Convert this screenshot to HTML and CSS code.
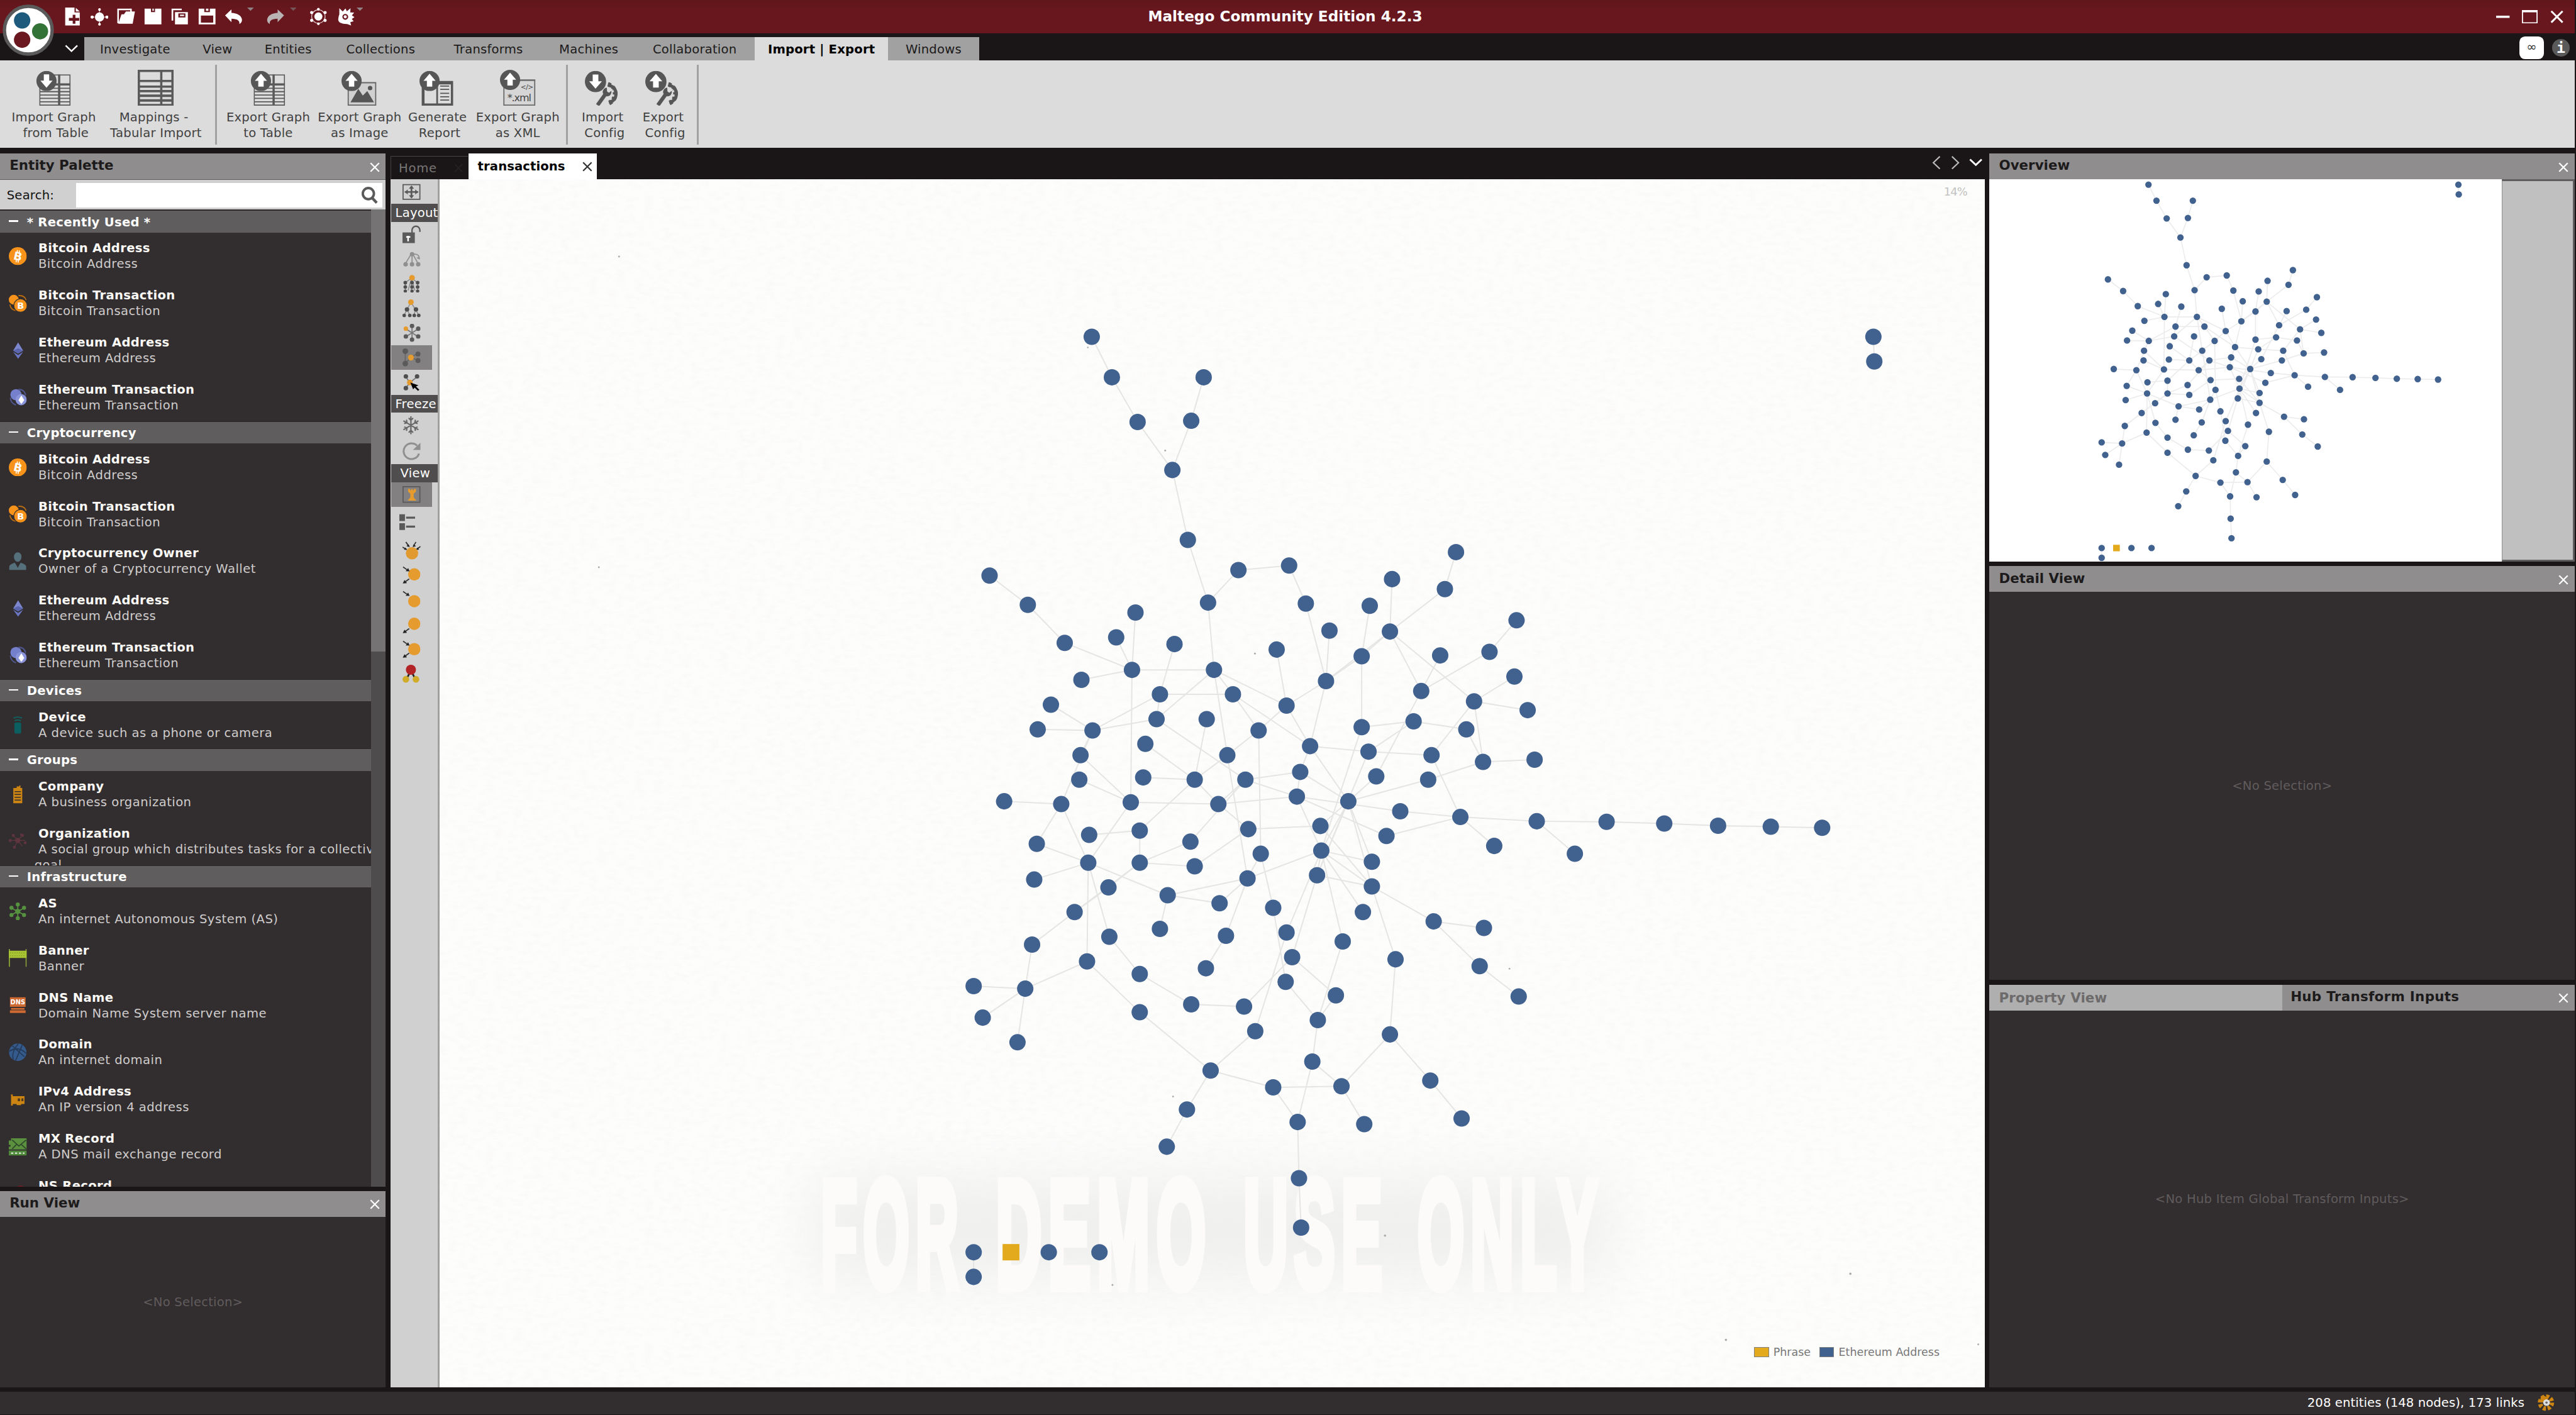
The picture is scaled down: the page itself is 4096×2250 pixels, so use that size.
FILE: index.html
```html
<!DOCTYPE html>
<html lang="en">
<head>
<meta charset="utf-8">
<title>Maltego Community Edition 4.2.3</title>
<link rel="stylesheet" href="styles.css">
</head>
<body>
<svg class="defs" width="0" height="0" aria-hidden="true">
  <symbol id="x" viewBox="0 0 10 10"><path d="M.8 .8 9.2 9.2M9.2 .8 .8 9.2" fill="none" stroke="currentColor" stroke-width="1.4"/></symbol>
  <symbol id="tri" viewBox="0 0 6 3"><path d="M0 0h6L3 3z" fill="currentColor"/></symbol>
  <symbol id="btc" viewBox="0 0 16 16"><circle cx="8" cy="8" r="8" fill="#f7931a"/><text x="8.2" y="11.7" class="glyph" transform="rotate(12 8 8)">B</text><path d="M7.6 2.6v2M9.4 3v2M6.6 11.4v2M8.4 11.8v2" stroke="#fff" stroke-width=".9"/></symbol>
  <symbol id="btx" viewBox="0 0 16 16"><circle cx="4.4" cy="4.8" r="4.4" fill="#f7931a"/><path d="M8.5 1.2q5.500-.6 7 4M1 9q.5 4.500 5 5.500" fill="none" stroke="#b86d13" stroke-width="1"/><circle cx="10.400" cy="10" r="5.900" fill="#f7931a" stroke="#322d2e" stroke-width=".6"/><text x="10.500" y="13" class="glyph small">B</text></symbol>
  <symbol id="eth" viewBox="0 0 16 16"><path d="M8.300 .8 12.800 8.200 8.300 10.800 3.900 8.200z" fill="#7b86cf"/><path d="M3.900 9.300 8.300 12 12.800 9.300 8.300 15.400z" fill="#6a76c4"/><path d="M8.300 6.200 12.800 8.200 8.300 10.800 3.900 8.200z" fill="#5a64ad"/></symbol>
  <symbol id="etx" viewBox="0 0 16 16"><circle cx="6.400" cy="5.400" r="5" fill="#7480cc"/><path d="M8.500 .8q5.500-.4 6.500 5M1.400 8q.3 5 5 6.600" fill="none" stroke="#4c548a" stroke-width="1.200"/><circle cx="11" cy="9.800" r="5" fill="#8a94da"/><path d="m11.200 6 2.600 4.200-2.600 3.600-2.600-3.600z" fill="#fff"/></symbol>
  <symbol id="person" viewBox="0 0 16 16"><path d="M8 .2a3.400 3.600 0 0 1 3.300 4c0 2-1.200 4.400-3.300 4.400S4.600 6.200 4.600 4.200A3.400 3.600 0 0 1 8 .2zM.4 16v-3.400q.4-1.800 5-3.200L7 12l1 2 1-2 1.500-2.600q4.600 1.400 5 3.200V16z" fill="#56707b"/></symbol>
  <symbol id="device" viewBox="0 0 16 16"><path d="M4.200 1.600q3.800-2 7.600 0M5.200 4q2.800-1.400 5.600 0" fill="none" stroke="#0f6563" stroke-width="1"/><rect x="5" y="5.500" width="6" height="10" rx="1.400" fill="#0b5f60"/></symbol>
  <symbol id="company" viewBox="0 0 16 16"><path d="M4 2.200h3V.8h2.400V0h1v2.200H12V16H4z" fill="#cc8413"/><path d="M5.200 5.500h5.600M5.200 8h5.600M5.200 10.500h5.600M5.200 13h5.600" stroke="#322d2e" stroke-width=".8"/></symbol>
  <symbol id="org" viewBox="0 0 16 16"><g fill="#5f3540" stroke="#5f3540" stroke-width=".7"><path d="M8 7 4 2.500M8 7l4-4.500M8 7 1.500 7M8 7h6.500M8 7l-3 6M8 7l4 5"/><circle cx="8" cy="7" r="2"/><circle cx="4" cy="2.500" r="1"/><circle cx="12.200" cy="2.500" r="1"/><circle cx="1.300" cy="7" r="1"/><circle cx="14.700" cy="9" r="1"/><circle cx="5" cy="13" r="1"/><circle cx="11" cy="1.800" r=".7"/></g></symbol>
  <symbol id="as" viewBox="0 0 16 16"><g fill="#55913f" stroke="#55913f" stroke-width="1"><path d="M8 2v12M2.500 5l11 6M13.500 5l-11 6"/><circle cx="8" cy="8" r="1.800"/><circle cx="8" cy="1.800" r="1.300"/><circle cx="8" cy="14.200" r="1.300"/><circle cx="2.400" cy="4.800" r="1.300"/><circle cx="13.600" cy="4.800" r="1.300"/><circle cx="2.400" cy="11.200" r="1.300"/><circle cx="13.600" cy="11.200" r="1.300"/></g></symbol>
  <symbol id="banner" viewBox="0 0 16 16"><path d="M.5 0v16M15.500 0v16" stroke="#8da536" stroke-width="1"/><path d="M0 1.500h16v6.500H0z" fill="#a9c433"/><path d="M1 3.500h14M1 6h14" stroke="#86a02a" stroke-width=".8" stroke-dasharray="1 1"/></symbol>
  <symbol id="dns" viewBox="0 0 16 16"><path d="M1 1h14v8.500H1zM2 10.500h12v1.600H2zM1 12.600h14V15H1z" fill="#cf6a33"/><text x="8" y="7.200" class="glyph dns">DNS</text></symbol>
  <symbol id="domain" viewBox="0 0 16 16"><circle cx="8" cy="8" r="7.800" fill="#355a8c"/><path d="M3 2.200 14 12M6 15.500 12 1.500M.5 7q8-5 15 2M4 14.500Q2 8 8.500.3" fill="none" stroke="#263b5a" stroke-width="1"/></symbol>
  <symbol id="ipv4" viewBox="0 0 16 16"><path d="M2 3.500h1.500V5H14v7h-3v1H7v-1H3.500v1.500H2z" fill="#cc8413"/><path d="M8 7h2v2.500H8zM11.300 7H13v2.500h-1.700z" fill="#4c3b20"/></symbol>
  <symbol id="mx" viewBox="0 0 16 16"><path d="M2 .5h14v10H0V8h1.500V6.500H0v-4h2z" fill="#5b903f"/><path d="m3 2 6 5.500L15.500 2M3 10l4-4M15.500 10l-4.500-4" fill="none" stroke="#2f4a2a" stroke-width="1"/><path d="M0 11.500h16V16H0z" fill="#4f8a3a"/><path d="M2 13.800h12" stroke="#fff" stroke-width="1" stroke-dasharray="2 1.500"/></symbol>
  <symbol id="ns" viewBox="0 0 16 16"><circle cx="10.500" cy="5" r="4.500" fill="#6b2026"/></symbol>
  <symbol id="up" viewBox="0 0 18 18"><circle cx="9" cy="9" r="9" fill="#565656"/><path d="m9 2.500 5.400 6.300h-3V14H6.600V8.800h-3z" fill="#fff"/></symbol>
  <symbol id="down" viewBox="0 0 18 18"><circle cx="9" cy="9" r="9" fill="#565656"/><path d="m9 15 5.400-6.300h-3V3H6.600v5.700h-3z" fill="#fff"/></symbol>
  <symbol id="sheet" viewBox="0 0 28 28"><path d="M.5.500h27v27H.5zM0 9.300h28M0 12.500h28M0 15.500h28M0 18.500h28M0 21.500h28M0 24.500h28" fill="none" stroke="#5a5a5a"/><path d="M0 9h28" stroke="#5a5a5a" stroke-width="2"/><path d="M17.800 0v28" stroke="#5a5a5a" stroke-width="2"/></symbol>
  <symbol id="wrench" viewBox="0 0 21 21"><g fill="none" stroke="#565656"><path d="M11.500 2.800a7.800 7.800 0 0 1 0 15.300" stroke-width="2.800"/><path d="M10.500 2a8.800 8.800 0 0 1 0 17" stroke-width="4.200" stroke-dasharray="2.500 2.300"/><path d="M1.300 20.500 8.500 10.500" stroke-width="3.400"/></g><circle cx="9.800" cy="8.800" r="3.900" fill="#565656"/><path d="M9.800 8.300 9.500 3.500 15 6.500 11.500 9.500z" fill="#dcdcdc"/></symbol>
  <symbol id="io" viewBox="0 0 16 16"><circle cx="10.500" cy="8" r="5.500" fill="#e59b2d"/></symbol>
  <symbol id="ain" viewBox="0 0 16 16"><path d="M.5.800 4 3.300" stroke="#333" fill="none"/><path d="M6.400 4.800 2.800 4.600 5 1.800z" fill="#222"/></symbol>
  <symbol id="aout" viewBox="0 0 16 16"><path d="M6 11.500 2.500 14" stroke="#333" fill="none"/><path d="M.2 15.600 4 15.300 1.800 12.500z" fill="#222"/></symbol>
</svg>

<div class="window">
  <header class="titlebar">
    <div class="quick">
      <svg viewBox="0 0 16 16"><path fill-rule="evenodd" d="M1.500 0h8.300v4.300h4.700V16h-13zM11 .3l3.500 3.200H11zM8.200 6.500v2.700H4.800v2.600h3.400v2.700h2.400v-2.700h3.400V9.200h-3.400V6.500z" fill="#fff"/></svg>
      <svg viewBox="0 0 16 16"><g fill="#fff" stroke="#fff" stroke-width=".8"><path d="M8 1v14M1 8.500h14" stroke-dasharray="1 .5"/><circle cx="8" cy="8.500" r="3.700"/><circle cx="8" cy="1.800" r=".8"/><circle cx="8" cy="15" r=".8"/><circle cx="1.400" cy="8.500" r="1"/><circle cx="14.600" cy="8.500" r="1"/></g></svg>
      <svg viewBox="0 0 16 16"><path d="M1 14V1.700h11.500" fill="none" stroke="#fff" stroke-width="1.400"/><path d="M12.500 1v3" stroke="#fff" stroke-width="1.400"/><path d="M4 6h2.200L8 3.500h8L14 14.500H1.200z" fill="#fff"/></svg>
      <svg viewBox="0 0 16 16"><path d="M.5 1h5.700v3h3.600V1h5.700v14H.5zM7.500 1h1.200v2H7.500z" fill="#fff"/></svg>
      <svg viewBox="0 0 16 16"><path d="M9.500 1.700H1.200v10" fill="none" stroke="#fff" stroke-width="1.500"/><path fill-rule="evenodd" d="M3.500 4H15v11H3.500zM6.500 5.200v3.600h6.300V5.200zM8 6.300h3.600v1.300H8z" fill="#fff"/></svg>
      <svg viewBox="0 0 16 16"><path fill-rule="evenodd" d="M.5 1h5v3h5V1h5v14H.5zM2.500 7.200v6.300h11V7.200zM7 1h2.200v2H7z" fill="#fff"/></svg>
      <svg viewBox="0 0 16 16"><path d="m.5 7 5.700-5.300v3q8 .5 9.300 5.500.5 3-2.300 4.500.8-4.500-7-4.700v3z" fill="#fff"/></svg>
      <svg class="tri dim" viewBox="0 0 6 3"><use href="#tri"/></svg>
      <svg class="redo" viewBox="0 0 16 16"><path d="M15.500 7 9.800 1.700v3Q1.800 5.200.5 10.200q-.5 3 2.300 4.500Q2 10.200 9.800 10v3z" fill="#b9b3b4"/></svg>
      <svg class="tri dimmer" viewBox="0 0 6 3"><use href="#tri"/></svg>
      <svg class="net" viewBox="0 0 16 16"><circle cx="8" cy="8" r="3.600" fill="#fff"/><circle cx="8" cy="8" r="6" fill="none" stroke="#e2c9cb" stroke-width=".7"/><g fill="#fff"><circle cx="8" cy="1.500" r="1.200"/><circle cx="8" cy="14.500" r="1.200"/><circle cx="2" cy="4.500" r="1.400"/><circle cx="14" cy="4.500" r="1.400"/><circle cx="2" cy="11.500" r="1.400"/><circle cx="14" cy="11.500" r="1.400"/></g></svg>
      <svg viewBox="0 0 16 16"><path d="m2 .5 3 3L7.500.8l1.200 2.500L12 .5l-.3 3.800 3.500.2-2 2.500 2.300 1.500-2.400 1.700 1.700 2-3 .8.700 3-3.500-1.300Q1 14.500 1 10.500q.3-3 1-4.500z" fill="#fff"/><circle cx="7.300" cy="8.300" r="2" fill="#fff" stroke="#69171f" stroke-width="1.200"/></svg>
      <svg class="tri dim last" viewBox="0 0 6 3"><use href="#tri"/></svg>
    </div>
    <h1>Maltego Community Edition 4.2.3</h1>
    <div class="winbtns">
      <svg viewBox="0 0 12 12"><path d="M0 6h12" stroke="#fff" stroke-width="2"/></svg>
      <svg class="max" viewBox="0 0 14 12"><path d="M.5.500h13v11H.5z" fill="none" stroke="#fff"/><path d="M0 1h14" stroke="#fff" stroke-width="2"/></svg>
      <svg viewBox="0 0 10 10"><use href="#x"/></svg>
    </div>
  </header>

  <nav class="tabs">
    <svg class="chev" viewBox="0 0 12 7"><path d="m.8.800 5.200 5 5.200-5" fill="none" stroke="#fff" stroke-width="1.400"/></svg>
    <div class="strip">
      <span>Investigate</span><span>View</span><span>Entities</span><span>Collections</span><span>Transforms</span><span>Machines</span><span>Collaboration</span><span class="on">Import | Export</span><span>Windows</span>
    </div>
    <div class="help"><span class="pill">∞</span><span class="info">i</span></div>
  </nav>
  <svg class="logo" viewBox="0 0 46 46"><circle cx="23" cy="23" r="21.300" fill="#fff" stroke="#5a5a5a" stroke-width="3"/><circle cx="17.500" cy="14.300" r="7.300" fill="#1d5a7c"/><circle cx="33.500" cy="24" r="7.200" fill="#337337"/><circle cx="17.500" cy="31.500" r="7.300" fill="#6a171f"/></svg>

  <section class="ribbon">
    <div class="group">
      <button style="width:8.4rem"><svg viewBox="0 0 32 32"><use href="#sheet" x="3" y="4" width="28" height="28"/><use href="#down" x="0" y="1" width="19" height="18"/></svg>Import Graph<br>&nbsp;from Table</button>
      <button style="width:9.8rem"><svg viewBox="0 0 32 32"><path fill-rule="evenodd" d="M0 0h32v32H0zM2 2v7h18V2zM22 2v7h8V2zM2 11v3h18v-3zM22 11v3h8v-3zM2 16v2h18v-2zM22 16v2h8v-2zM2 20v2h18v-2zM22 20v2h8v-2zM2 24.200v2h18v-2zM22 24.200v2h8v-2zM2 28.500v2h18v-2zM22 28.500v2h8v-2z" fill="#5a5a5a"/></svg>Mappings -&nbsp;<br>Tabular Import</button>
    </div>
    <div class="group">
      <button style="width:8.1rem"><svg viewBox="0 0 32 32"><use href="#sheet" x="3" y="4" width="28" height="28"/><use href="#up" x="0" y="1" width="19" height="18"/></svg>Export Graph<br>to Table</button>
      <button style="width:8.2rem"><svg viewBox="0 0 32 32"><path d="M6 11.500h24.500v20H6z" fill="#d0d0d0" stroke="#666"/><path d="m8 29 7-12 4 6 4-4 6 10z" fill="#565656"/><circle cx="25.500" cy="16.300" r="2" fill="#565656"/><use href="#up" x="0" y="1" width="18" height="18"/></svg>Export Graph<br>as Image</button>
      <button style="width:5.7rem"><svg viewBox="0 0 32 32"><path fill-rule="evenodd" d="M2 10h28v22H2zM4.500 13v17h10.500V13zM16.500 13v17h11.500V13z" fill="#565656"/><path d="M18.500 14.500h8M18.500 17.500h8M18.500 21h8M18.500 24h8M18.500 27h8" stroke="#565656"/><use href="#up" x="0" y="1" width="18" height="18"/></svg>Generate<br>&nbsp;Report</button>
      <button style="width:8.6rem"><svg viewBox="0 0 32 32"><path d="M3.500 9.500H31v22H3.500z" fill="#d6d6d6" stroke="#6a6a6a"/><path d="M3 9h28.500" stroke="#6a6a6a"/><text x="24" y="17.500" class="tag">&lt;/&gt;</text><text x="17" y="28" class="xml">*.xml</text><use href="#up" x="0" y="0" width="18" height="18"/></svg>Export Graph<br>as XML</button>
    </div>
    <div class="group">
      <button style="width:5.2rem"><svg viewBox="0 0 32 32"><use href="#wrench" x="10" y="11" width="21" height="21"/><use href="#down" x="0" y="1" width="19" height="19"/></svg>Import<br>&nbsp;Config</button>
      <button style="width:5.6rem"><svg viewBox="0 0 32 32"><use href="#wrench" x="10" y="11" width="21" height="21"/><use href="#up" x="0" y="1" width="19" height="19"/></svg>Export<br>&nbsp;Config</button>
    </div>
  </section>

  <main class="work">
    <aside class="left">
      <section class="palette">
        <div class="phead"><b>Entity Palette</b><svg viewBox="0 0 10 10"><use href="#x"/></svg></div>
        <div class="search"><label>Search:</label><div class="field"><svg viewBox="0 0 16 16"><circle cx="7" cy="6.500" r="5.300" fill="none" stroke="#5a5a5a" stroke-width="2.300"/><path d="m10.500 10.500 4.500 4.700" stroke="#5a5a5a" stroke-width="2.600"/></svg></div></div>
        <div class="listwrap">
          <div class="list">
            <h3>* Recently Used *</h3>
            <div class="item"><svg><use href="#btc"/></svg><p><b>Bitcoin Address</b>Bitcoin Address</p></div>
            <div class="item"><svg><use href="#btx"/></svg><p><b>Bitcoin Transaction</b>Bitcoin Transaction</p></div>
            <div class="item"><svg><use href="#eth"/></svg><p><b>Ethereum Address</b>Ethereum Address</p></div>
            <div class="item"><svg><use href="#etx"/></svg><p><b>Ethereum Transaction</b>Ethereum Transaction</p></div>
            <h3>Cryptocurrency</h3>
            <div class="item"><svg><use href="#btc"/></svg><p><b>Bitcoin Address</b>Bitcoin Address</p></div>
            <div class="item"><svg><use href="#btx"/></svg><p><b>Bitcoin Transaction</b>Bitcoin Transaction</p></div>
            <div class="item"><svg><use href="#person"/></svg><p><b>Cryptocurrency Owner</b>Owner of a Cryptocurrency Wallet</p></div>
            <div class="item"><svg><use href="#eth"/></svg><p><b>Ethereum Address</b>Ethereum Address</p></div>
            <div class="item"><svg><use href="#etx"/></svg><p><b>Ethereum Transaction</b>Ethereum Transaction</p></div>
            <h3>Devices</h3>
            <div class="item"><svg><use href="#device"/></svg><p><b>Device</b>A device such as a phone or camera</p></div>
            <h3>Groups</h3>
            <div class="item"><svg><use href="#company"/></svg><p><b>Company</b>A business organization</p></div>
            <div class="item"><svg><use href="#org"/></svg><p><b>Organization</b>A social group which distributes tasks for a collective<br><span class="hang">goal</span></p></div>
            <h3>Infrastructure</h3>
            <div class="item"><svg><use href="#as"/></svg><p><b>AS</b>An internet Autonomous System (AS)</p></div>
            <div class="item"><svg><use href="#banner"/></svg><p><b>Banner</b>Banner</p></div>
            <div class="item"><svg><use href="#dns"/></svg><p><b>DNS Name</b>Domain Name System server name</p></div>
            <div class="item"><svg><use href="#domain"/></svg><p><b>Domain</b>An internet domain</p></div>
            <div class="item"><svg><use href="#ipv4"/></svg><p><b>IPv4 Address</b>An IP version 4 address</p></div>
            <div class="item"><svg><use href="#mx"/></svg><p><b>MX Record</b>A DNS mail exchange record</p></div>
            <div class="item"><svg><use href="#ns"/></svg><p><b>NS Record</b></p></div>
          </div>
          <div class="scroll"><i></i></div>
        </div>
      </section>
      <section class="run">
        <div class="phead"><b>Run View</b><svg viewBox="0 0 10 10"><use href="#x"/></svg></div>
        <div class="empty">&lt;No Selection&gt;</div>
      </section>
    </aside>

    <section class="center">
      <div class="doctabs">
        <span class="home">Home<svg viewBox="0 0 10 10"><use href="#x"/></svg></span>
        <span class="doc">transactions<svg viewBox="0 0 10 10"><use href="#x"/></svg></span>
        <div class="nav">
          <svg viewBox="0 0 8 12"><path d="M7 .5 1.200 6 7 11.500" fill="none" stroke="#bbb" stroke-width="1.200"/></svg>
          <svg viewBox="0 0 8 12"><path d="M1 .5 6.800 6 1 11.500" fill="none" stroke="#bbb" stroke-width="1.200"/></svg>
          <svg class="v" viewBox="0 0 12 7"><path d="m.8.800 5.200 5 5.200-5" fill="none" stroke="#fff" stroke-width="1.600"/></svg>
        </div>
      </div>
      <div class="docbody">
        <div class="tools">
          <span class="t22"><svg viewBox="0 0 16 16"><path d="M.5 1.500h15v13H.5z" fill="none" stroke="#5a5a5a"/><path d="M2 8h12M8 2.800v10.400" stroke="#5a5a5a" stroke-width="1.500"/><path d="m2 8 2.700-2.300v4.600zM14 8l-2.700-2.300v4.600zM8 2.300 5.700 5h4.600zM8 13.700 5.700 11h4.600z" fill="#5a5a5a"/></svg></span>
          <h4>Layout</h4>
          <span class="t22"><svg viewBox="0 0 16 16"><path d="M8.500 7V4.500a3.500 3.500 0 0 1 7 0V6" fill="none" stroke="#5a5a5a" stroke-width="1.300"/><path d="M0 6.500h11V16H0z" fill="#5a5a5a"/><path d="M5 14.500v-5M3.300 10.500h3.700" stroke="#fff" stroke-width="1.400"/></svg></span>
          <span class="t22"><svg viewBox="0 0 16 16"><g fill="#8f8f8f" stroke="#8f8f8f"><path d="M8 3 2.500 12M8.500 3v9M9 3l5 9" /><path d="M10 3.500q5-.5 5 4l-2-1" fill="none"/><circle cx="8.500" cy="3.500" r="1.500"/><circle cx="2.800" cy="12.500" r="1.500"/><circle cx="8.500" cy="12.500" r="1.500"/><circle cx="14" cy="12.500" r="1.500"/></g></svg></span>
          <span class="t22"><svg viewBox="0 0 16 16"><path d="M8 3 2.500 7v7M8 3v11M8 3l5.500 4v7M8 3 5 14M8 3l3 11" fill="none" stroke="#888" stroke-width=".8"/><g fill="#4e4e4e"><circle cx="2.500" cy="7" r="1.600"/><circle cx="8.500" cy="7" r="1.600"/><circle cx="13.500" cy="7" r="1.600"/><circle cx="2.500" cy="10.800" r="1.600"/><circle cx="8.500" cy="10.800" r="1.600"/><circle cx="13.500" cy="10.800" r="1.600"/><circle cx="2.500" cy="14.500" r="1.500"/><circle cx="8.500" cy="14.500" r="1.500"/><circle cx="13.500" cy="14.500" r="1.500"/></g><circle cx="8.500" cy="2.600" r="2.500" fill="#e59b2d"/></svg></span>
          <span class="t22"><svg viewBox="0 0 16 16"><path d="M7.500 2.500 1.500 14M7.500 2.500l7 11.500M4 9l2.500 5M12 9l-2 5" fill="none" stroke="#888" stroke-width=".8"/><g fill="#4e4e4e"><circle cx="4" cy="9" r="2"/><circle cx="12" cy="9" r="2"/><circle cx="1.500" cy="14.300" r="1.600"/><circle cx="6.500" cy="14.300" r="1.600"/><circle cx="10.500" cy="14.300" r="1.600"/><circle cx="14.500" cy="14.300" r="1.600"/></g><circle cx="7.500" cy="2.500" r="2.500" fill="#e59b2d"/></svg></span>
          <span class="t22"><svg viewBox="0 0 16 16"><path d="M8.500 2v12M3 4.500l11 7M14 4.500l-11 7" stroke="#777"/><g fill="#5a5a5a"><circle cx="8.500" cy="1.800" r="2"/><circle cx="8.500" cy="14" r="2"/><circle cx="14" cy="4.300" r="2"/><circle cx="3" cy="11.200" r="2"/><circle cx="14" cy="11.200" r="2"/></g><circle cx="3" cy="4.300" r="2" fill="#e59b2d"/></svg></span>
          <span class="t22 sel"><svg viewBox="0 0 16 16"><path d="M2.500 2.500v11M7.500 8l6-3.500M7.500 8l6 2.500M7.500 8l-5 5.500" stroke="#666"/><g fill="#5a5a5a"><circle cx="2.500" cy="2.500" r="2.500"/><circle cx="2.500" cy="13.500" r="2.500"/><circle cx="13.800" cy="5" r="2.200"/><circle cx="13.800" cy="10.800" r="2.200"/></g><circle cx="7.500" cy="8.200" r="2.600" fill="#e59b2d"/></svg></span>
          <span class="t22"><svg viewBox="0 0 16 16"><path d="m3 3 3.500 5-3.500 5M6.500 8 13 3" fill="none" stroke="#777"/><g fill="#4e4e4e"><circle cx="3" cy="2.500" r="2"/><circle cx="13" cy="2.500" r="2"/><circle cx="3" cy="13" r="2"/></g><circle cx="6.500" cy="8" r="2.500" fill="#e59b2d"/><path d="m7 8 7.200 2.500-2.200 1 3 3-1.200 1-3-3-1.300 1.700z"/></svg></span>
          <h4>Freeze</h4>
          <span class="t23"><svg viewBox="0 0 16 16"><g stroke="#666" stroke-width="1.200" fill="none"><path d="M7.500 0v16M.8 4l13.400 8M14.200 4 .8 12M5.500 1.500l2 2 2-2M5.500 14.500l2-2 2 2M1.500 6.500l2.500-.8L3.500 3M13.500 6.500 11 5.700l.5-2.700M1.500 9.500l2.500.8-.5 2.700M13.500 9.500l-2.500.8.500 2.700"/></g></svg></span>
          <span class="t23"><svg viewBox="0 0 16 16"><path d="M13 3.200a7 7 0 1 0 1.700 7" fill="none" stroke="#8f8f8f" stroke-width="1.700"/><path d="M16 .5V7H9.300z" fill="#8f8f8f"/></svg></span>
          <h4 class="mid">View</h4>
          <span class="t22 sel"><svg viewBox="0 0 16 16"><path d="M.5 1h15v14H.5z" fill="none" stroke="#5a5a5a"/><path d="M5 3h1.700v1H8V3h1v1h1.300V3H12v2.500L10 7.500v3l1.500 2H12v1H5v-1h.5l1.500-2v-3L5 5.500z" fill="#e59b2d"/></svg></span>
          <span class="t28"><svg viewBox="0 0 16 16"><path d="M0 1h5v6H0zM0 9h5v6H0z" fill="#5a5a5a"/><path d="M6 4h8M6 12h8" stroke="#5a5a5a" stroke-width="1.800"/></svg></span>
          <span class="t22"><svg viewBox="0 0 16 16"><path d="m3 .5 2.500 3.500M12 .5 9.800 4M0 5l3.500 2M16 4.500 12.500 7" stroke="#333"/><path d="m6.500 5-3-.8 2-1.700zM9 5l3-.8-2-1.700zM4.300 7.600l-3-.3 1.200-2zM11.800 7.600l3-.3-1.200-2z" fill="#222"/><circle cx="8.500" cy="10.500" r="5.500" fill="#e09a30"/></svg></span>
          <span class="t22"><svg viewBox="0 0 16 16"><use href="#io" y="-.5"/><use href="#ain"/><use href="#aout"/></svg></span>
          <span class="t22"><svg viewBox="0 0 16 16"><use href="#io" y="1.500"/><use href="#ain"/></svg></span>
          <span class="t22"><svg viewBox="0 0 16 16"><use href="#io" y="-.8"/><use href="#aout"/></svg></span>
          <span class="t22"><svg viewBox="0 0 16 16"><use href="#io"/><use href="#ain"/><use href="#aout"/></svg></span>
          <span class="t22"><svg viewBox="0 0 16 16"><path d="M7 6 4.500 11M8 6l2.500 5" stroke="#222" stroke-width="1.600"/><circle cx="7.500" cy="4.500" r="4.500" fill="#b22426"/><circle cx="3" cy="13" r="3" fill="#d0ac2a"/><circle cx="12" cy="13" r="3" fill="#d0ac2a"/></svg></span>
        </div>
        <div class="canvas">
          <svg class="graph" viewBox="392 160 1378 1077">
            <defs>
              <filter id="soft" x="-20%" y="-60%" width="140%" height="220%"><feGaussianBlur stdDeviation="26"/></filter>
              <filter id="paper" x="0" y="0" width="100%" height="100%"><feTurbulence type="fractalNoise" baseFrequency=".12 .25" numOctaves="3" seed="4"/><feColorMatrix values="0 0 0 0 .6  0 0 0 0 .55  0 0 0 0 .5  0 0 0 .13 -.05"/></filter>
            </defs>
            <rect x="392" y="160" width="1378" height="1077" filter="url(#paper)"/>
            <rect x="725" y="1052" width="710" height="88" fill="#efefee" filter="url(#soft)"/>
            <g class="watermark">
              <text x="732" y="1148" textLength="128" lengthAdjust="spacingAndGlyphs">FOR</text>
              <text x="888" y="1148" textLength="193" lengthAdjust="spacingAndGlyphs">DEMO</text>
              <text x="1109" y="1148" textLength="129" lengthAdjust="spacingAndGlyphs">USE</text>
              <text x="1264" y="1148" textLength="166" lengthAdjust="spacingAndGlyphs">ONLY</text>
            </g>
            <g fill="#aaa"><circle cx="1039" cy="402" r=".8"/><circle cx="970" cy="310" r=".7"/><circle cx="552" cy="229" r=".8"/><circle cx="1119" cy="583" r=".8"/><circle cx="1046" cy="978" r=".8"/><circle cx="1235" cy="1102" r="1"/><circle cx="992" cy="1146" r=".8"/><circle cx="1539" cy="1195" r="1"/><circle cx="1650" cy="1136" r="1"/><circle cx="1764" cy="1199" r=".8"/><circle cx="1346" cy="864" r=".8"/><circle cx="534" cy="506" r=".8"/></g>
            <g class="links"></g><g class="nodes"></g>
          </svg>
          <span class="zoomlevel">14%</span>
          <div class="legend"><i class="gold"></i>Phrase<i class="blue"></i>Ethereum Address</div>
        </div>
      </div>
    </section>

    <aside class="right">
      <section class="overview">
        <div class="phead"><b>Overview</b><svg viewBox="0 0 10 10"><use href="#x"/></svg></div>
        <div class="ovbody">
          <svg class="graph mini" viewBox="1774 160 457 341"><g transform="translate(1530 45.500) scale(.3965 .397)"><g class="links"></g><g class="nodes"></g></g></svg>
          <div class="outside"></div>
        </div>
      </section>
      <section class="detail">
        <div class="phead"><b>Detail View</b><svg viewBox="0 0 10 10"><use href="#x"/></svg></div>
        <div class="empty">&lt;No Selection&gt;</div>
      </section>
      <section class="props">
        <div class="ptabs"><b class="off">Property View</b><div class="phead hub"><b>Hub Transform Inputs</b><svg viewBox="0 0 10 10"><use href="#x"/></svg></div></div>
        <div class="empty">&lt;No Hub Item Global Transform Inputs&gt;</div>
      </section>
    </aside>
  </main>

  <footer class="status"><span>208 entities (148 nodes), 173 links</span>
    <svg viewBox="0 0 16 16"><circle cx="8" cy="8" r="5.300" fill="none" stroke="#cc8413" stroke-width="4" stroke-dasharray="2.600 1.560"/><circle cx="6" cy="5" r="3" fill="#cc8413"/><circle cx="8.500" cy="8" r="3" fill="#ddd"/><circle cx="8.500" cy="8" r="1" fill="#666"/></svg>
  </footer>
</div>
<script src="graph.js"></script>
</body>
</html>
```
FILE: styles.css
```css
/* 1rem = 10 interface pixels */
html { font-size: 17.832px; }
* { box-sizing: border-box; margin: 0; padding: 0; }
body { width: 4096px; height: 2250px; overflow: hidden; background: #1a1617; font-family: "DejaVu Sans", sans-serif; }
.window { position: relative; display: flex; flex-direction: column; width: 229.7rem; height: 126.2rem; font-size: 1.1rem; letter-spacing: .012rem; }
svg { display: block; flex: none; }
.defs { display: none; }
.glyph { font: bold 10px "DejaVu Sans", sans-serif; fill: #fff; text-anchor: middle; letter-spacing: 0; }
.glyph.small { font-size: 8px; }
.glyph.dns { font-size: 5.5px; }

.titlebar { height: 3rem; flex: none; position: relative; display: flex; justify-content: space-between; background: linear-gradient(#5f161b, #69171f 35%); width: 229.6rem; }
.quick { display: flex; padding: .7rem 0 0 5.25rem; color: #8f8385; }
.quick svg { width: 1.6rem; height: 1.6rem; margin: 0 .4rem; }
.quick .tri { width: .6rem; height: .3rem; margin: 0; }
.quick .dimmer { color: #75545a; margin-left: .05rem; }
.quick .redo { margin-left: 1.15rem; }
.quick .net { margin-left: 1.15rem; margin-right: .5rem; }
.quick .last { margin-left: -.3rem; }
h1 { position: absolute; left: 0; right: 0; top: .75rem; text-align: center; font-size: 1.3rem; line-height: 1.5rem; color: #fff; letter-spacing: 0; padding-right: .4rem; }
.winbtns { display: flex; align-items: center; gap: 1.1rem; padding-right: 1rem; color: #fff; }
.winbtns svg { width: 1.2rem; height: 1.2rem; }
.winbtns .max { width: 1.4rem; }

.tabs { height: 2.4rem; flex: none; display: flex; align-items: stretch; }
.chev { width: 1.2rem; height: .7rem; margin: 1rem .5rem 0 5.8rem; }
.strip { display: grid; grid-template-columns: 9.1rem 5.6rem 7rem 9.5rem 9.7rem 8.2rem 10.7rem 11.9rem 8.1rem; margin-top: .3rem; background: #a1a1a1; color: #1c1a1a; line-height: 2.25rem; height: 2.1rem; text-align: center; white-space: nowrap; }
.strip span { height: 2.1rem; }
.strip .on { background: #dcdcdc; color: #000; font-weight: bold; letter-spacing: .01rem; }
.help { margin-left: auto; display: flex; align-items: center; gap: .7rem; padding: .1rem .55rem 0 0; }
.pill { width: 2.2rem; height: 2rem; border-radius: .5rem; background: #fff; color: #333; text-align: center; line-height: 1.9rem; font-size: 1.1rem; }
.info { width: 1.6rem; height: 1.6rem; border-radius: 50%; background: #5a5a5a; color: #fff; text-align: center; font: bold 1.3rem/1.6rem "DejaVu Sans Mono", monospace; letter-spacing: 0; }
.logo { position: absolute; left: .2rem; top: .4rem; width: 4.6rem; height: 4.6rem; }

.ribbon { height: 7.8rem; flex: none; width: 229.6rem; display: flex; background: #dcdcdc; padding: .4rem 0 .3rem .6rem; }
.group { display: flex; border-right: .2rem solid #a1a1a1; padding-right: .4rem; margin-right: .5rem; }
.group + .group { padding-right: 0; }
.group:last-child { padding-right: .2rem; }
.ribbon button { align-self: flex-start; border: 0; background: none; color: #414141; font: inherit; letter-spacing: inherit; line-height: 1.4rem; text-align: center; white-space: nowrap; display: block; padding-top: .4rem; }
.ribbon button svg { width: 3.2rem; height: 3.2rem; margin: 0 auto .44rem; }
.xml { font: 9px "DejaVu Sans", sans-serif; fill: #444; text-anchor: middle; letter-spacing: -.6px; }
.tag { font: 6px "DejaVu Sans", sans-serif; fill: #444; text-anchor: middle; letter-spacing: -.3px; }

.work { flex: none; height: 110.5rem; padding-top: .5rem; display: grid; grid-template-columns: 34.4rem 142.2rem 52.2rem; column-gap: .4rem; }
.phead { height: 2.3rem; background: #8f8d8e; display: flex; align-items: center; justify-content: space-between; padding: 0 .55rem .2rem .85rem; color: #1c1a1b; font-size: 1.2rem; letter-spacing: 0; flex: none; }
.phead svg { width: .9rem; height: .9rem; color: #fff; margin-top: .3rem; }
.hub { letter-spacing: .018rem; padding-left: .75rem; }
.left, .right { display: flex; flex-direction: column; }
.palette { height: 92.1rem; display: flex; flex-direction: column; overflow: hidden; flex: none; }
.search { height: 2.7rem; flex: none; background: #d0d0d0; border-top: .1rem solid #5f5d5e; display: flex; align-items: center; padding: .1rem .3rem 0 .6rem; color: #111; }
.search label { width: 6.2rem; }
.field { flex: 1; height: 2.2rem; background: #fff; display: flex; justify-content: flex-end; align-items: center; padding-right: .4rem; }
.field svg { width: 1.5rem; height: 1.5rem; }
.listwrap { flex: 1; min-height: 0; display: flex; }
.list { width: 33.1rem; overflow: hidden; background: #322d2e; color: #cfcccc; padding-top: .05rem; }
.list h3 { height: 2rem; border-top: .1rem solid #2b2728; background: #5f5d5e; color: #fff; font-size: 1.1rem; line-height: 1.9rem; padding: .1rem 0 0 .8rem; display: flex; align-items: center; letter-spacing: .015rem; }
.list h3::before { content: ""; width: .8rem; height: .16rem; background: #fff; margin: 0 .8rem .2rem 0; }
.item { height: 4.2rem; display: flex; overflow: hidden; padding: .76rem 0 0 .8rem; white-space: nowrap; }
.item svg { width: 1.6rem; height: 1.6rem; margin: .55rem 1.02rem 0 0; }
.item p { line-height: 1.4rem; letter-spacing: .025rem; }
.item b { display: block; color: #fbfaf6; letter-spacing: .017rem; }
.hang { margin-left: -.35rem; }
.scroll { flex: 1; background: #4f4c4d; }
.scroll i { display: block; height: 39.4rem; background: #757374; }
.run { margin-top: .4rem; height: 17.5rem; background: #322d2e; display: flex; flex-direction: column; }
.empty { flex: 1; display: flex; align-items: center; justify-content: center; background: #322d2e; color: #605c5d; }

.center { display: flex; flex-direction: column; }
.doctabs { height: 2.3rem; flex: none; display: flex; align-items: flex-end; }
.home { width: 6.9rem; height: 2.1rem; margin-right: .1rem; border: solid #454243; border-width: .1rem 0 0 .1rem; color: #777475; display: flex; align-items: center; justify-content: space-between; padding: 0 .4rem 0 .7rem; letter-spacing: .04rem; }
.home svg { width: .8rem; height: .8rem; color: #252122; }
.doc { width: 11.4rem; height: 2.3rem; background: #fff; color: #000; font-weight: bold; letter-spacing: .005rem; display: flex; align-items: center; justify-content: space-between; padding: 0 .3rem 0 .8rem; }
.doc svg { width: 1rem; height: .9rem; color: #333; }
.nav { margin-left: auto; display: flex; gap: .85rem; padding: 0 .2rem .9rem 0; align-items: center; }
.nav svg { width: .8rem; height: 1.2rem; }
.nav .v { width: 1.2rem; height: .7rem; }
.docbody { height: 107.7rem; display: flex; }
.tools { width: 4.4rem; background: #d0d0d0; border-right: .2rem solid #a0a0a0; flex: none; padding-left: .1rem; }
.tools h4 { height: 1.6rem; font-weight: normal; font-size: 1.1rem; line-height: 1.65rem; background: #504d4e; color: #fff; padding-left: .35rem; overflow: hidden; }
.tools h4.mid { padding-left: .8rem; }
.tools span { display: flex; width: 3.6rem; height: 2.2rem; align-items: center; padding-left: 1rem; }
.tools .t23 { height: 2.3rem; }
.tools .t28 { height: 2.8rem; padding-left: .7rem; }
.tools .sel { background: #828081; }
.tools svg { width: 1.6rem; height: 1.6rem; }
.canvas { flex: 1; position: relative; background: #fdfdfc; overflow: hidden; }
.graph { width: 100%; height: 100%; }
.watermark { font: bold 136px "Liberation Sans Narrow", "Liberation Sans", sans-serif; letter-spacing: 14px; fill: #fcfbfa; stroke: #fcfbfa; stroke-width: 9px; }
.links { stroke: #e5e5e4; stroke-width: 1.1; }
.nodes { fill: #41618f; }
.nodes .phrase { fill: #e4aa1d; }
.mini .links { stroke: #ececec; stroke-width: 2.4; }
.zoomlevel { position: absolute; right: 1.6rem; top: .5rem; font-size: 1rem; color: #c2c2c0; letter-spacing: -.05rem; }
.legend { position: absolute; right: 4.05rem; bottom: 2.45rem; display: flex; align-items: center; font-size: .98rem; letter-spacing: 0; color: #777; height: 1.4rem; }
.legend i { width: 1.3rem; height: .9rem; border: .1rem solid #808080; margin-right: .4rem; }
.legend .gold { background: #e4aa1d; }
.legend .blue { background: #41618f; margin-left: .8rem; }

.right { width: 52.2rem; }
.overview { height: 36.4rem; display: flex; flex-direction: column; }
.ovbody { height: 34.1rem; display: flex; background: #fff; }
.mini { width: 45.7rem; }
.outside { flex: 1; background: #c0c0c0; border: .2rem solid #5f5d5e; border-left: .1rem solid #8f8d8e; }
.detail { height: 36.9rem; margin-top: .4rem; display: flex; flex-direction: column; }
.props { height: 35.9rem; margin-top: .4rem; display: flex; flex-direction: column; }
.ptabs { display: flex; }
.ptabs > * { width: 50%; }
.ptabs .off { background: #afafaf; color: #6c6a6a; font-size: 1.2rem; line-height: 2.3rem; height: 2.3rem; padding-left: .85rem; letter-spacing: .005rem; }

.status { margin-top: .4rem; height: 2rem; flex: none; width: 229.6rem; background: #322d2e; color: #fff; display: flex; align-items: center; justify-content: flex-end; gap: 1.1rem; padding-right: 1.8rem; letter-spacing: .005rem; }
.status svg { width: 1.6rem; height: 1.6rem; }
```
FILE: graph.js
```js
// Node centres in interface pixels; ids are 1-based positions in this list.
const nodes = [
  [973.5,300.5],[991.5,336.6],[1073.3,336.6],[1014.4,376.5],[1062.2,375.4],[1045.4,419.3],[1059.2,481.6],[1104.3,508.5],[1149.5,504.5],[1077.2,537.5],
  [1164.4,538.4],[1185.5,562.5],[1138.4,579.4],[882.4,513.4],[916.5,539.5],[949.4,573.4],[1012.5,546.4],[995.3,568.5],[1047.3,574.5],[1009.4,597.5],
  [1082.5,597.5],[964.3,606.4],[1034.3,619.3],[1099.4,619.3],[937.1,628.5],[925.3,650.6],[974.2,651.5],[1031.3,641.4],[1076,641.4],[1122.3,651.5],
  [1147.2,629.4],[1182.4,607.5],[1214.2,585.4],[1221.4,540.4],[1241.3,516.6],[1239.4,563.3],[1298.3,492.5],[1288.4,525.5],[1352.3,553.3],[1328.2,581.4],
  [1284.2,584.6],[1350.4,603.5],[1267.3,616.4],[1314.4,625.6],[1362.2,633.4],[1260.5,643.4],[1307.5,650.6],[1214.2,648.6],[1168.2,665.5],[1220.3,670.4],
  [1276.5,673.6],[1322.4,679.6],[1368.4,677.6],[1021.3,663.5],[963.5,673.6],[1094.4,673.6],[962.4,695.4],[1019.4,693.4],[1065.3,695.4],[1110.5,695.4],
  [1159.4,688.5],[1227.2,692.5],[1273.5,695.4],[895.4,714.7],[946.3,717.2],[1008.3,715.6],[1086.4,717.2],[1156.4,710.5],[1202.3,714.7],[1248.6,723.6],
  [1302.2,728.7],[1370.3,732.5],[1332.4,754.5],[1404.3,761.5],[971.2,744.6],[1016.3,740.8],[924.5,752.6],[1061.5,750.7],[1113.1,739.5],[1177.4,736.7],
  [1236.3,745.6],[970.4,769.5],[1016.3,769.5],[1065.3,772.7],[1124.2,761.5],[1178.2,758.7],[1223.3,768.6],[922.2,784.5],[988.4,791.5],[1041.2,798.5],
  [1112.4,783.5],[1174.4,780.7],[1223.3,790.6],[958.2,813.5],[1087.5,805.6],[1135.3,809.7],[1215.3,813.5],[920.3,842.5],[989.2,835.5],[1034.3,828.5],
  [1093.2,834.6],[1147.2,831.7],[1197.3,839.7],[1278.4,821.8],[1323.2,827.6],[969.3,857.5],[1016.3,868.7],[1075.3,863.6],[1152.2,853.7],[1244.4,855.6],
  [1319.4,861.7],[868.2,879.5],[914.2,881.8],[1146.4,875.7],[1191.2,887.8],[1354.2,888.8],[876.3,907.6],[907.3,929.6],[1016.3,902.8],[1062.2,895.8],
  [1109.3,897.7],[1119.3,919.7],[1175.1,909.8],[1239.4,922.6],[1170.2,946.8],[1196.2,968.8],[1275.4,963.7],[1079.5,954.8],[1135.3,969.8],[1058.4,989.5],
  [1157.1,1000.7],[1216.5,1002.6],[1303.3,997.5],[1040.4,1022.7],[1158.3,1050.8],[1160.2,1094.8],[868.2,1116.8],[901.5,1116.8],[935.2,1116.8],[980.4,1116.8],
  [868.2,1138.8],[1432.6,733],[1484,734.5],[1532,736.5],[1579,737.3],[1624.8,738.3],[1670.5,300.5],[1671.3,322.5]
];
const PHRASE = 138;

const links = `1-2 2-4 4-6 3-5 5-6 6-7 7-10 10-8 8-9 9-11 11-32 12-32 10-21 14-15 15-16 16-20 17-20 18-20 22-20 20-21
20-66 19-23 23-24 23-28 23-27 27-28 21-28 21-24 21-31 21-56 24-49 24-30 25-27 26-27 27-55 27-65 55-66 57-66 28-60
29-59 54-59 58-59 30-56 56-59 30-31 13-31 31-32 32-33 33-36 32-36 33-34 33-48 35-36 36-38 37-38 36-43 36-44 41-43
43-40 40-39 44-42 44-45 44-51 44-52 47-52 46-47 46-48 46-50 43-62 48-86 50-92 62-69 32-49 31-49 49-50 49-61 49-69
50-51 51-71 52-63 52-53 63-69 60-61 60-68 61-69 61-68 30-85 56-91 59-67 59-76 60-67 67-68 67-66 67-79 60-78
66-82 65-64 65-77 65-82 75-76 76-83 82-77 82-88 82-90 82-99 82-106 83-78 83-84 83-89 83-94 94-89 94-98 79-84 79-80
85-91 85-96 91-90 90-95 91-95 90-100 91-101 101-108 91-86 68-86 68-70 70-71 71-72 71-73 71-81 68-81 72-74 72-142
142-143 143-144 144-145 145-146 69-80 69-86 69-92 69-87 69-93 80-93 86-87 86-92 92-93 86-93 86-97 86-103 86-102
92-109 93-110 93-104 104-105 104-111 111-116 98-113 112-113 117-113 118-113 113-106 106-119 119-128 99-107 107-120
120-121 121-109 102-122 109-115 103-123 115-123 114-123 96-114 123-125 125-126 125-131 124-110 124-126 124-127
127-133 126-129 126-132 129-131 128-122 128-129 128-130 130-134 131-135 135-136 137-141 147-148`.split(/\s+/);

const lines = links.map(pair => {
  const [a, b] = pair.split("-").map(n => nodes[n - 1]);
  return `<line x1="${a[0]}" y1="${a[1]}" x2="${b[0]}" y2="${b[1]}"/>`;
}).join("");
const shapes = nodes.map(([x, y], i) => i + 1 === PHRASE
  ? `<rect class="phrase" x="${x - 7.5}" y="${y - 7.3}" width="15" height="14.6"/>`
  : `<circle cx="${x}" cy="${y}" r="7.3"/>`).join("");

document.querySelectorAll(".links").forEach(g => { g.innerHTML = lines; });
document.querySelectorAll(".nodes").forEach(g => { g.innerHTML = shapes; });
```
